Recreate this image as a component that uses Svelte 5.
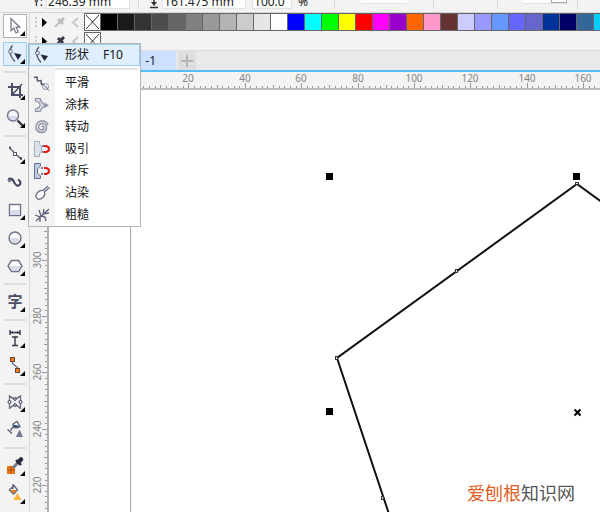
<script>
  const ink = '#55586c';

  // 24x24 drawings for the toolbox
  const icons = {
    pick: `<path d="M8 4.500V16.500L10.800 14L13 19L15.200 18L13.200 13.200H16.800Z" fill="#fff" stroke="#777a8c" stroke-width="1.300"/>`,
    shape: `<path d="M9.500 3.500Q6.500 7 7 10Q7.500 15 12 19.500" fill="none" stroke="${ink}" stroke-width="1.300"/><circle cx="7.500" cy="9.500" r="1.800" fill="#fff" stroke="${ink}"/><path d="M11 11L18.500 12.500L15 18Z" fill="#22243a"/>`,
    crop: `<path d="M5 9H17V20M9 5V17H20" fill="none" stroke="#4c4f66" stroke-width="2"/><path d="M9 17L19 6" stroke="#4c4f66" stroke-width="1.500"/>`,
    zoom: `<path d="M14.500 14.500L20 20" stroke="#333548" stroke-width="2.400"/><circle cx="10" cy="9.500" r="5.500" fill="#f4f6fb" stroke="#777b90" stroke-width="1.500"/><path d="M5.500 10H14.500Q13.500 14 10 14T5.500 10" fill="#d4d9e8"/>`,
    freehand: `<path d="M6.500 6L18 17" stroke="${ink}" stroke-width="1.200"/><path d="M6 4.500H8V7H6Z" fill="${ink}"/><rect x="10.500" y="10.500" width="3" height="3" fill="#fff" stroke="${ink}"/><path d="M17 15H19V18H17Z" fill="${ink}"/>`,
    artistic: `<path d="M6 11Q5 8.500 7.500 8.500Q10 9 11.500 13Q14 17 16.500 15Q19 12 15 9.500" fill="none" stroke="#3c3f55" stroke-width="2"/><circle cx="6.500" cy="10.500" r="1.800" fill="#777b90"/>`,
    rectangle: `<rect x="6.500" y="6.500" width="11" height="11" fill="#fff" stroke="#6c7086" stroke-width="1.400"/><path d="M7 12H17V17H7Z" fill="#d8dbe8"/>`,
    ellipse: `<circle cx="12" cy="12" r="6" fill="#fff" stroke="#6c7086" stroke-width="1.400"/><path d="M7 12H17Q16 17 12 17T7 12" fill="#d8dbe8"/>`,
    polygon: `<path d="M8.500 6.500H15.500L19 12L15.500 17.500H8.500L5 12Z" fill="#fff" stroke="#6c7086" stroke-width="1.400"/><path d="M6 12H18L15 17H9Z" fill="#d8dbe8"/>`,
    dimension: `<path d="M7 4V9M17 4V9M7 6.500H17M9 11H15M9 19.500H15M12 11V19.500" stroke="#33364a" stroke-width="1.400"/><path d="M7.500 6.500L10 5V8ZM16.500 6.500L14 5V8Z" fill="#33364a"/>`,
    connector: `<path d="M9.500 7V9.500L15 14" fill="none" stroke="#6c7086" stroke-width="1.300"/><rect x="7.500" y="3.500" width="4" height="4" fill="#f57c12" stroke="#6b4a3a"/><rect x="12.500" y="14.500" width="4" height="4" fill="#f57c12" stroke="#6b4a3a"/>`,
    mesh: `<path d="M6.500 5V19M17.500 5V19M6.500 5.500Q12 12 17.500 5.500M6.500 18.500Q12 12 17.500 18.500" fill="none" stroke="#6c7086" stroke-width="1.300"/><g fill="#fff" stroke="#33364a"><circle cx="6.500" cy="12" r="1.500"/><circle cx="17.500" cy="12" r="1.500"/><circle cx="12" cy="9" r="1.300"/><circle cx="12" cy="15" r="1.300"/></g>`,
    smartfill: `<path d="M10 6L14 3.500L17 8.500Q13.500 11 10.500 9ZM10 9L7.500 12.500M4.500 11.500L9 15.500" fill="#fff" stroke="#5c6077" stroke-width="1.300"/><path d="M10 6.500L17 8Q13.500 11 10.500 9Z" fill="#33517d"/><path d="M16.500 11.500L20 19H13Z" fill="#707994"/>`,
    eyedropper: `<path d="M4 12H12V20H4Z" fill="#e87912"/><path d="M4 16H12M8 12V20" stroke="#a94f0c"/><path d="M10 14L16 7.500" stroke="#777b90" stroke-width="3"/><path d="M13 6L18 11" stroke="#27293c" stroke-width="2.400"/><path d="M15.500 8L18 5.500" stroke="#27293c" stroke-width="4.500" stroke-linecap="round"/>`,
    fill: `<path d="M6.500 8L11 3.500L14.500 8L10.500 12ZM10 2V7" fill="#fff" stroke="#5c6077" stroke-width="1.300"/><path d="M7.500 8H14L10.500 11.500Z" fill="#e87912"/><path d="M14.500 11L18.500 18H10.500Z" fill="#f6b73c"/>`,
  };

  // 20x20 drawings for the flyout
  const flyoutIcons = {
    shape: `<path d="M7 2Q4 5 4.500 8Q5 13 9 17.500" fill="none" stroke="${ink}" stroke-width="1.300"/><circle cx="5.500" cy="8" r="1.800" fill="#fff" stroke="${ink}"/><path d="M8.500 9.500L16 11L12.500 16Z" fill="#22243a"/>`,
    smooth: `<path d="M2 4.500L5 4L5.500 8L9 7.500L9.500 11.500H12" fill="none" stroke="${ink}" stroke-width="1.500"/><circle cx="13.500" cy="13.500" r="3" fill="#f2f3f8" stroke="#8b8fa3"/><path d="M10.500 10.500L17 17.500" stroke="${ink}"/>`,
    smear: `<path d="M3.500 3.500H8Q9.500 8 12 9V12Q9.500 13 8 16.500H3.500V14Q8 13 8 10Q8 7 3.500 6Z" fill="#d8dae3" stroke="#8b8fa3" stroke-width="1.200"/><path d="M12.500 7.500L17 10.500L12.500 13Z" fill="#8b8fa3"/>`,
    twirl: `<path d="M9.500 10Q11 8.500 12 10Q12.500 13 9.500 13Q6 12.500 6.500 9.500Q7.500 6 11 6.500Q15 7.500 14.500 11.500Q13 16 9 15.500Q3.500 14.500 4 9Q5.500 3.500 11 4Q15 4.500 16 8" fill="none" stroke="#8b8fa3" stroke-width="1.400"/>`,
    attract: `<path d="M2.500 2.500H7.500V5L9.500 8V12L7.500 15V17.500H2.500Z" fill="#dce3ed" stroke="#a4afc0"/><path d="M12 7H14Q17 7.500 17 10T14 13H12" fill="none" stroke="#e51919" stroke-width="2"/><path d="M10 7H12M10 13H12" stroke="#777b90" stroke-width="2"/>`,
    repel: `<path d="M2.500 2.500H8.500V5L5.500 8V12L8.500 15V17.500H2.500Z" fill="#bccbdd" stroke="#60758d"/><path d="M12 7H14Q17 7.500 17 10T14 13H12" fill="none" stroke="#e51919" stroke-width="2"/><path d="M9 7H11M9 13H11" stroke="#777b90" stroke-width="2"/>`,
    smudge: `<path d="M16 3L11 7.500Q8 7 5.500 9.500Q2.500 13 5 15.500Q8 17.500 11.500 14Q13.500 11.500 12.500 9L17.500 4.500" fill="#fafbfe" stroke="#6c7086" stroke-width="1.300"/>`,
    roughen: `<path d="M4 16L17 4M3 10L8 12L8 17M7 5L9 11L13 12L14 16M12 4L11 9L17 8" fill="none" stroke="#5c6077" stroke-width="1.300"/>`,
  };

  const toolGroups = [
    [
      { id: 'pick', label: '选择' },
      { id: 'shape', label: '形状' },
    ],
    [
      { id: 'crop', label: '裁剪' },
      { id: 'zoom', label: '缩放' },
    ],
    [
      { id: 'freehand', label: '手绘' },
      { id: 'artistic', label: '艺术笔', single: true },
      { id: 'rectangle', label: '矩形' },
      { id: 'ellipse', label: '椭圆形' },
      { id: 'polygon', label: '多边形' },
    ],
    [{ id: 'text', label: '文本' }],
    [
      { id: 'dimension', label: '度量' },
      { id: 'connector', label: '连接器' },
    ],
    [
      { id: 'mesh', label: '网状填充' },
      { id: 'smartfill', label: '智能填充', single: true },
    ],
    [
      { id: 'eyedropper', label: '滴管' },
      { id: 'fill', label: '填充' },
    ],
  ];

  const flyout = [
    { id: 'shape', label: '形状', key: 'F10' },
    { id: 'smooth', label: '平滑' },
    { id: 'smear', label: '涂抹' },
    { id: 'twirl', label: '转动' },
    { id: 'attract', label: '吸引' },
    { id: 'repel', label: '排斥' },
    { id: 'smudge', label: '沾染' },
    { id: 'roughen', label: '粗糙' },
  ];

  const colors = [
    '#000000', '#1a1a1a', '#333333', '#4d4d4d', '#666666', '#808080',
    '#999999', '#b3b3b3', '#cccccc', '#e6e6e6', '#ffffff', '#0000ff',
    '#00ffff', '#00ff00', '#ffff00', '#ff0000', '#ff00ff', '#9900cc',
    '#ff6600', '#ff99cc', '#663333', '#ccccff', '#9999ff', '#6699ff',
    '#6666ff', '#6666cc', '#003399', '#000066', '#336699', '#00ccff',
  ];

  // Ruler scale: pixels for 2 mm of the drawing
  const step = 5.64;
  const tickSize = (value) => (value % 20 === 0 ? 5 : value % 10 === 0 ? 3 : 2);

  let activeTool = $state('shape');
  let width = $state(0);
  let height = $state(0);

  let hTicks = $derived(
    Array.from({ length: Math.max(0, Math.floor((width - 83) / step)) }, (_, i) => ({
      at: Math.round(83 + i * step),
      value: i * 2,
    }))
  );
  let vTicks = $derived(
    Array.from({ length: Math.max(0, Math.floor(height / step)) }, (_, i) => ({
      at: Math.round(6 + i * step),
      value: 358 - i * 2,
    }))
  );
</script>

{#snippet paletteTools(dropper)}
  <svg width="54" height="18" viewBox="0 0 54 18" aria-hidden="true">
    <path d="M5 4h2v2h-2zM5 8h2v2h-2zM5 12h2v2h-2z" fill="#c9c9c9" />
    <path d="M12 5v9l5-4.500z" fill="#000" />
    <path d="M25 14l5-5" stroke={dropper} stroke-width="2" />
    <path d="M28 6l5 5M31 8l3-3" stroke={dropper} stroke-width="3" />
    <path d="M48 5l-5 4.500l5 4.500" fill="none" stroke="#c9c9c9" stroke-width="2" />
  </svg>
  <button class="swatch swatch--none" aria-label="无颜色">
    <svg width="15" height="16" viewBox="0 0 15 16"><path d="M1 1l13 14M14 1L1 15" stroke="#333" /></svg>
  </button>
{/snippet}

<div class="app">
  <header class="properties">
    <label class="field">Y: <input class="size" value="246.39 mm" /></label>
    <span class="divider"></span>
    <label class="field">
      <svg width="10" height="12" viewBox="0 0 10 12" role="img" aria-label="高度">
        <path d="M5 0v8M1 10.500h8" stroke="#333" stroke-width="1.500" /><path d="M2 5h6L5 9z" fill="#333" />
      </svg>
      <input class="size" value="161.475 mm" />
    </label>
    <label class="field field--percent"><input class="scale" value="100.0" /> %</label>
    <span class="divider divider--spaced"></span>
    <span class="cell"></span>
    <span class="divider divider--spaced"></span>
    <span class="divider divider--far"></span>
    <span class="cell"><span class="cell__box"></span></span>
    <span class="divider"></span>
  </header>

  <main class="workspace">
    <nav class="toolbox" aria-label="工具箱">
      {#each toolGroups as group}
        <div class="toolbox__group">
          {#each group as tool}
            <div class="toolbox__item">
              <button
                class="tool"
                class:tool--framed={tool.id === 'pick'}
                class:is-active={tool.id === activeTool}
                aria-label={tool.label}
                onclick={() => (activeTool = tool.id)}
              >
                {#if tool.id === 'text'}<span class="tool__text">字</span>{/if}
                <svg class="tool__icon" width="24" height="24" viewBox="0 0 24 24" aria-hidden="true">
                  {@html icons[tool.id] ?? ''}
                  {#if !tool.single}
                    <path d="M22 17v5h-5z" fill="#000" />
                  {/if}
                </svg>
              </button>

              {#if tool.id === 'shape'}
                <div class="flyout" role="menu">
                  {#each flyout as item, i}
                    <button class="flyout__item" class:is-current={i === 0} role="menuitem">
                      <span class="flyout__icon">
                        <svg width="20" height="20" viewBox="0 0 20 20" aria-hidden="true">
                          {@html flyoutIcons[item.id]}
                        </svg>
                      </span>
                      <span class="flyout__label">{item.label}</span>
                      {#if item.key}<span>{item.key}</span>{/if}
                    </button>
                    {#if i === 0}
                      <div class="flyout__divider"></div>
                    {/if}
                  {/each}
                </div>
              {/if}
            </div>
          {/each}
        </div>
      {/each}
    </nav>

    <section class="document">
      <div class="palette">
        {@render paletteTools('#bdbdbd')}
        {#each colors as color}
          <button class="swatch" style:background={color} aria-label={color}></button>
        {/each}
      </div>
      <div class="palette">
        {@render paletteTools('#33364a')}
      </div>

      <div class="tabs">
        <button class="tab">-1</button>
        <button class="tab-add" aria-label="新建">
          <svg width="12" height="12" viewBox="0 0 12 12"><path d="M6 0v12M0 6h12" stroke="#b4b4b4" stroke-width="2" /></svg>
        </button>
      </div>

      <div class="sheet" bind:clientWidth={width} bind:clientHeight={height}>
        <div class="ruler-corner"></div>
        <svg class="ruler ruler--top" aria-hidden="true">
          {#each hTicks as { at, value }}
            <path d="M{at + 0.5} {16 - tickSize(value)}V16" />
            {#if value % 20 === 0}
              <text x={at} y="10">{value}</text>
            {/if}
          {/each}
        </svg>
        <svg class="ruler ruler--left" aria-hidden="true">
          {#each vTicks as { at, value }}
            <path d="M{17 - tickSize(value)} {at + 0.5}H17" />
            {#if value % 20 === 0}
              <text transform="translate(11 {at}) rotate(-90)">{value}</text>
            {/if}
          {/each}
        </svg>

        <div class="canvas">
          <svg class="drawing" role="img" aria-label="多边形">
            <path d="M81.500 0V2000" stroke="#aaa" />
            <path d="M668 196L528 94L288 268L380 544" fill="none" stroke="#111" stroke-width="2" />
            <path d="M277 83h7v7h-7zM524 83h7v7h-7zM277 318h7v7h-7z" fill="#000" />
            <path d="M525.500 319.500l6 6M531.500 319.500l-6 6" stroke="#000" stroke-width="2" />
            <g fill="#ddd" stroke="#333">
              <rect x="526.500" y="92.500" width="3" height="2" />
              <rect x="406.500" y="179.500" width="2" height="3" />
              <rect x="286.500" y="266.500" width="2" height="3" />
              <rect x="332.500" y="406.500" width="2" height="3" />
            </g>
          </svg>
          <p class="watermark"><span>爱刨根</span>知识网</p>
        </div>
      </div>
    </section>
  </main>
</div>

<style>
  :global(body) {
    margin: 0;
  }

  .app {
    display: flex;
    flex-direction: column;
    height: 100vh;
    overflow: hidden;
    background: #f3f3f3;
    color: #222;
    font: 12px/16px "Noto Sans", "Noto Sans CJK SC", sans-serif;
  }

  button {
    padding: 0;
    border: 0;
    background: none;
    color: inherit;
    font: inherit;
  }

  svg {
    display: block;
    flex: none;
  }

  /* === Property bar === */
  .properties {
    display: flex;
    flex: none;
    align-items: flex-end;
    gap: 6px;
    height: 13px;
    padding: 0 0 3px 33px;
    box-sizing: border-box;
    overflow: hidden;
    border-bottom: 1px solid #d4d4d4;
  }

  .field {
    display: flex;
    flex: none;
    align-items: flex-end;
    gap: 3px;
    line-height: 14px;
  }

  .field--percent {
    gap: 6px;
  }

  .field input {
    height: 18px;
    box-sizing: border-box;
    padding: 2px 1px 0;
    border: 1px solid #dde1e8;
    background: #fff;
    color: #222;
    font: inherit;
  }

  .size { width: 84px; }
  .scale { width: 40px; }

  .divider {
    flex: none;
    width: 1px;
    height: 20px;
    margin: 0 4px 0 2px;
    background: #d5d5d5;
  }

  .divider--spaced {
    margin: 0 20px;
  }

  .divider--far {
    margin: 0 19px 0 37px;
  }

  .cell {
    display: flex;
    flex: none;
    align-items: flex-end;
    justify-content: flex-end;
    width: 46px;
    height: 20px;
    margin-bottom: 6px;
    background: #fff;
    box-shadow: 0 1px #dde1e8;
  }

  .cell__box {
    width: 14px;
    height: 14px;
    margin-right: 2px;
    border: 1px solid #a5a5a5;
  }

  /* === Toolbox === */
  .workspace {
    display: flex;
    flex: 1;
    min-height: 0;
  }

  .toolbox {
    flex: none;
    width: 29px;
    margin-top: -1px;
    border-right: 1px solid #d9d9d9;
  }

  .toolbox__group + .toolbox__group::before {
    content: "";
    display: block;
    height: 2px;
    margin: 3px 3px 3px 4px;
    background: #dedede;
  }

  .toolbox__group {
    display: flow-root;
  }

  .toolbox__item {
    position: relative;
    padding: 2px 0 2px 3px;
  }

  .tool {
    display: grid;
    width: 24px;
    height: 24px;
  }

  .tool__icon,
  .tool__text {
    grid-area: 1 / 1;
  }

  .tool__text {
    color: #4c4f66;
    font: 700 15px/22px "Noto Sans CJK SC", sans-serif;
    text-align: center;
  }

  .tool--framed {
    background: #fff;
    box-shadow: inset 0 0 0 1px #b0b0b0;
  }

  .tool.is-active {
    background: #e0effe;
    box-shadow: inset 0 0 0 1px #99cdf5;
  }

  /* === Flyout === */
  .flyout {
    position: absolute;
    z-index: 2;
    top: 3px;
    left: 28px;
    width: 111px;
    border: 1px solid #b4b4b4;
    background: linear-gradient(to right, #f3f3f3 26px, #fff 26px);
  }

  .flyout__item {
    display: flex;
    align-items: center;
    width: 100%;
    height: 22px;
    color: #111;
    text-align: left;
  }

  .flyout__item.is-current {
    background: #e0effe;
    box-shadow: inset 0 0 0 1px #9ccff5;
  }

  .flyout__icon {
    width: 33px;
    padding-left: 3px;
  }

  .flyout__label {
    width: 38px;
  }

  .flyout__divider {
    height: 2px;
    margin: 2px 2px 2px 26px;
    background: #e4e4e4;
  }

  /* === Colour palettes === */
  .document {
    display: flex;
    flex: 1;
    flex-direction: column;
    min-width: 0;
  }

  .palette {
    display: flex;
    flex: none;
    height: 18px;
    overflow: hidden;
  }

  .palette + .palette {
    padding-top: 1px;
  }

  .swatch {
    flex: none;
    width: 17px;
    border: solid #666;
    border-width: 1px 1px 1px 0;
  }

  .swatch--none {
    border-width: 1px;
    background: #fff;
  }

  /* === Tabs === */
  .tabs {
    display: flex;
    flex: none;
    gap: 2px;
    height: 19px;
    border-top: 1px solid #dcdcdc;
    border-bottom: 2px solid #55bdf7;
    background: #e9e9e9;
  }

  .tab {
    width: 146px;
    padding-right: 20px;
    background: #cce0ff;
    text-align: right;
  }

  .tab-add {
    display: grid;
    place-items: center;
    width: 18px;
    background: #dedede;
  }

  /* === Rulers and canvas === */
  .sheet {
    display: grid;
    flex: 1;
    grid-template: 18px 1fr / 19px 1fr;
    min-height: 0;
  }

  .ruler-corner {
    border-bottom: 2px solid #bcbcbc;
  }

  .ruler {
    width: 100%;
    height: 100%;
    box-sizing: border-box;
    overflow: hidden;
    stroke: #999;
  }

  .ruler--top {
    border-bottom: 2px solid #bcbcbc;
  }

  .ruler--left {
    min-height: 0;
    border-right: 2px solid #b0b0b0;
  }

  .ruler text {
    fill: #858585;
    stroke: none;
    font-size: 10px;
    text-anchor: middle;
  }

  .canvas {
    position: relative;
    min-width: 0;
    min-height: 0;
    overflow: hidden;
    background: #fff;
  }

  .drawing {
    width: 100%;
    height: 100%;
  }

  .watermark {
    position: absolute;
    right: 25px;
    bottom: 7px;
    margin: 0;
    color: #555;
    font: 400 18px/26px "Noto Sans CJK SC", sans-serif;
  }

  .watermark span {
    color: #e0601f;
  }
</style>
